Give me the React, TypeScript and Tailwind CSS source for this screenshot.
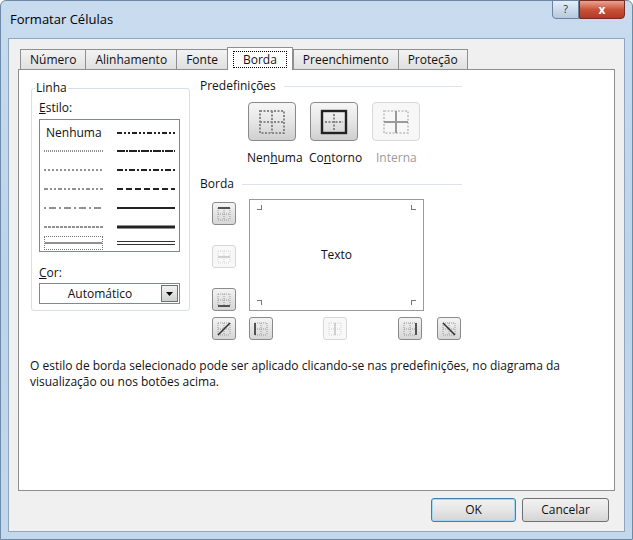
import React from 'react';

const font = { fontFamily: '"Segoe UI", "Open Sans", "Liberation Sans", sans-serif' };

const Line = ({ dash, w = 1, double }: { dash?: string; w?: number; double?: boolean }) => (
  <svg width="60" height="8" className="block">
    {double ? (
      <>
        <line x1="0" y1="2.5" x2="60" y2="2.5" stroke="#333" strokeWidth="1" />
        <line x1="0" y1="5.5" x2="60" y2="5.5" stroke="#333" strokeWidth="1" />
      </>
    ) : (
      <line x1="0" y1="4" x2="60" y2="4" stroke="#222" strokeWidth={w} strokeDasharray={dash} />
    )}
  </svg>
);

// small border buttons: which lines are solid
const MiniGrid = ({ solid, disabled }: { solid: string[]; disabled?: boolean }) => {
  const c = disabled ? '#c8c8c8' : '#333';
  const dot = disabled ? '#d4d4d4' : '#9a9a9a';
  const lines: Record<string, [number, number, number, number]> = {
    top: [3, 3, 15, 3],
    bottom: [3, 15, 15, 15],
    left: [3, 3, 3, 15],
    right: [15, 3, 15, 15],
    h: [3, 9, 15, 9],
    v: [9, 3, 9, 15],
    d1: [3, 15, 15, 3],
    d2: [3, 3, 15, 15],
  };
  return (
    <svg width="18" height="18">
      {['top', 'bottom', 'left', 'right', 'h', 'v'].map((k) => {
        const [a, b, cc, d] = lines[k];
        return <line key={k} x1={a} y1={b} x2={cc} y2={d} stroke={dot} strokeWidth="1" strokeDasharray="1 1" />;
      })}
      {solid.map((k) => {
        const [a, b, cc, d] = lines[k];
        return <line key={'s' + k} x1={a} y1={b} x2={cc} y2={d} stroke={c} strokeWidth="1.6" />;
      })}
    </svg>
  );
};

const SmallBtn = ({ solid, disabled }: { solid: string[]; disabled?: boolean }) => (
  <div
    className={`w-[24px] h-[23px] rounded-[3px] border flex items-center justify-center ${
      disabled ? 'border-[#d8d8d8] bg-[#f8f8f8]' : 'border-[#8a8a8a] bg-gradient-to-b from-[#f4f4f4] to-[#d6d6d6]'
    }`}
  >
    <MiniGrid solid={solid} disabled={disabled} />
  </div>
);

const Preset = ({ kind }: { kind: 'none' | 'outline' | 'inside' }) => {
  const disabled = kind === 'inside';
  return (
    <div
      className={`w-[48px] h-[39px] rounded-[4px] border flex items-center justify-center ${
        disabled ? 'border-[#d8d8d8] bg-[#f7f7f7]' : 'border-[#8a8a8a] bg-gradient-to-b from-[#f6f6f6] via-[#e6e6e6] to-[#cfcfcf]'
      }`}
    >
      <svg width="30" height="28">
        <g stroke={disabled ? '#ccc' : '#888'} strokeWidth="2" strokeDasharray="2 1.5" fill="none">
          {kind !== 'outline' && <rect x="3" y="3" width="24" height="22" />}
          {kind === 'none' && <line x1="15" y1="3" x2="15" y2="25" />}
          {kind === 'none' && <line x1="3" y1="14" x2="27" y2="14" />}
          {kind === 'outline' && <line x1="15" y1="6" x2="15" y2="22" />}
          {kind === 'outline' && <line x1="6" y1="14" x2="24" y2="14" />}
        </g>
        {kind === 'outline' && <rect x="3" y="3" width="24" height="22" stroke="#222" strokeWidth="2.4" fill="none" />}
        {kind === 'inside' && (
          <g stroke="#9a9a9a" strokeWidth="2">
            <line x1="15" y1="3" x2="15" y2="25" />
            <line x1="3" y1="14" x2="27" y2="14" />
          </g>
        )}
      </svg>
    </div>
  );
};

export default function App() {
  const tabs = ['Número', 'Alinhamento', 'Fonte', 'Borda', 'Preenchimento', 'Proteção'];
  return (
    <div className="w-[633px] h-[540px] bg-white text-[12px] text-[#111]" style={font}>
      <div className="w-[633px] h-[540px] bg-gradient-to-b from-[#c9dcef] via-[#bcd3ea] to-[#c4d8ec] border border-[#6f8aa8] rounded-t-[6px] flex flex-col px-[7px] pb-[7px]">
        {/* title bar */}
        <div className="h-[37px] flex items-start justify-between">
          <span className="text-[13px] text-black mt-[9px] ml-[2px]">Formatar Células</span>
          <div className="flex -mt-px">
            <div className="w-[27px] h-[19px] border border-[#6d84a0] rounded-bl-[4px] bg-gradient-to-b from-[#e4eef8] to-[#b6c9dd] flex items-center justify-center text-[11px] text-[#333]">?</div>
            <div className="w-[46px] h-[19px] border border-[#7a2a20] rounded-br-[4px] bg-gradient-to-b from-[#e8a593] via-[#c9523a] to-[#b43a22] flex items-center justify-center text-white text-[12px] font-bold">x</div>
          </div>
        </div>
        {/* client */}
        <div className="flex-1 bg-[#f0f0f0] border border-[#8fa6c0] flex flex-col px-[9px] pt-[7px] pb-[8px]">
          <div className="flex items-end h-[23px] pl-[2px]">
            {tabs.map((t) =>
              t === 'Borda' ? (
                <div key={t} className="h-[23px] px-[5px] pt-[3px] bg-white border border-[#8e8f8f] border-b-0 -mb-px relative z-10">
                  <span className="border border-dotted border-black px-[9px] leading-[15px] inline-block">{t}</span>
                </div>
              ) : (
                <div key={t} className="h-[20px] px-[9px] bg-gradient-to-b from-[#f3f3f3] to-[#e0e0e0] border border-[#8e8f8f] border-b-0 -mr-px leading-[19px]">
                  {t}
                </div>
              )
            )}
          </div>
          <div className="h-[422px] bg-white border border-[#8e8f8f] flex flex-col px-[12px] pt-[15px]">
            <div className="flex">
              {/* Linha */}
              <fieldset className="w-[159px] h-[232px] border border-[#d5dfe5] rounded-[3px] px-[7px] -mt-[6px]">
                <legend className="px-px -ml-[4px]">Linha</legend>
                <div className="mt-[2px]"><u>E</u>stilo:</div>
                <div className="mt-[2px] w-[141px] h-[133px] border border-[#828790] bg-white px-[4px] py-[4px] grid grid-cols-2 gap-x-[14px] content-start">
                  <div className="h-[17px] leading-[17px] pl-[2px]">Nenhuma</div>
                  <div className="h-[17px] flex items-center"><Line dash="5 2 2 2 2 2" w={2} /></div>
                  <div className="h-[19px] flex items-center"><Line dash="1 1" /></div>
                  <div className="h-[19px] flex items-center"><Line dash="8 1 2 1" w={2} /></div>
                  <div className="h-[19px] flex items-center"><Line dash="2 2" /></div>
                  <div className="h-[19px] flex items-center"><Line dash="6 2 2 2" w={2} /></div>
                  <div className="h-[19px] flex items-center"><Line dash="4 2 2 2 2 2" /></div>
                  <div className="h-[19px] flex items-center"><Line dash="6 3" w={2} /></div>
                  <div className="h-[19px] flex items-center"><Line dash="2 3 7 3" /></div>
                  <div className="h-[19px] flex items-center"><Line w={2} /></div>
                  <div className="h-[19px] flex items-center"><Line dash="3 1" /></div>
                  <div className="h-[19px] flex items-center"><Line w={3} /></div>
                  <div className="h-[14px] flex items-center border border-dotted border-[#777]"><Line /></div>
                  <div className="h-[14px] flex items-center"><Line double /></div>
                </div>
                <div className="mt-[12px]"><u>C</u>or:</div>
                <div className="mt-[1px] w-[141px] h-[21px] border border-[#828790] bg-white flex">
                  <div className="flex-1 text-center leading-[19px]">Automático</div>
                  <div className="w-[17px] h-[17px] m-px border border-[#707070] bg-gradient-to-b from-[#f2f2f2] to-[#d0d0d0] flex items-center justify-center">
                    <svg width="7" height="4"><path d="M0 0h7L3.5 4z" fill="#000" /></svg>
                  </div>
                </div>
              </fieldset>
              {/* right side */}
              <div className="ml-[10px] flex flex-col w-[262px]">
                <div className="flex items-center -mt-[8px]">
                  <span>Predefinições</span>
                  <div className="flex-1 h-px bg-[#dde3e8] ml-[8px]" />
                </div>
                <div className="flex gap-[14px] ml-[48px] mt-[7px]">
                  <Preset kind="none" />
                  <Preset kind="outline" />
                  <Preset kind="inside" />
                </div>
                <div className="flex ml-[47px] mt-[8px] gap-[3px]">
                  <span className="w-[59px]">Nen<u>h</u>uma</span>
                  <span className="w-[64px]">Co<u>n</u>torno</span>
                  <span className="text-[#9a9a9a]">Interna</span>
                </div>
                <div className="flex items-center mt-[8px]">
                  <span>Borda</span>
                  <div className="flex-1 h-px bg-[#dde3e8] ml-[8px]" />
                </div>
                <div className="flex mt-[6px] ml-[12px]">
                  <div className="flex flex-col gap-[20px] pt-[3px]">
                    <SmallBtn solid={['top']} />
                    <SmallBtn solid={['h']} disabled />
                    <SmallBtn solid={['bottom']} />
                  </div>
                  <div className="ml-[13px] w-[175px] h-[112px] border border-[#9a9a9a] bg-white relative flex items-center justify-center">
                    <span>Texto</span>
                    <span className="absolute left-[7px] top-[5px] w-[5px] h-[5px] border-r border-b border-[#777]" />
                    <span className="absolute right-[7px] top-[5px] w-[5px] h-[5px] border-l border-b border-[#777]" />
                    <span className="absolute left-[7px] bottom-[5px] w-[5px] h-[5px] border-r border-t border-[#777]" />
                    <span className="absolute right-[7px] bottom-[5px] w-[5px] h-[5px] border-l border-t border-[#777]" />
                  </div>
                </div>
                <div className="flex mt-[6px] ml-[12px]">
                  <SmallBtn solid={['d1']} />
                  <div className="ml-[13px]"><SmallBtn solid={['left']} /></div>
                  <div className="ml-[50px]"><SmallBtn solid={['v']} disabled /></div>
                  <div className="ml-[51px]"><SmallBtn solid={['right']} /></div>
                  <div className="ml-[15px]"><SmallBtn solid={['d2']} /></div>
                </div>
              </div>
            </div>
            <p className="mt-[18px] leading-[16px] -ml-[1px]">
              O estilo de borda selecionado pode ser aplicado clicando-se nas predefinições, no diagrama da
              <br />
              visualização ou nos botões acima.
            </p>
          </div>
          <div className="flex justify-end gap-[6px] mt-[7px] mr-[6px]">
            <button className="w-[85px] h-[24px] rounded-[3px] border border-[#3c7fb1] bg-gradient-to-b from-[#f2f2f2] via-[#e6e6e6] to-[#d4d4d4] shadow-[inset_0_0_0_1px_#a6d8f2]">OK</button>
            <button className="w-[87px] h-[24px] rounded-[3px] border border-[#707070] bg-gradient-to-b from-[#f2f2f2] via-[#e6e6e6] to-[#d4d4d4]">Cancelar</button>
          </div>
        </div>
      </div>
    </div>
  );
}
